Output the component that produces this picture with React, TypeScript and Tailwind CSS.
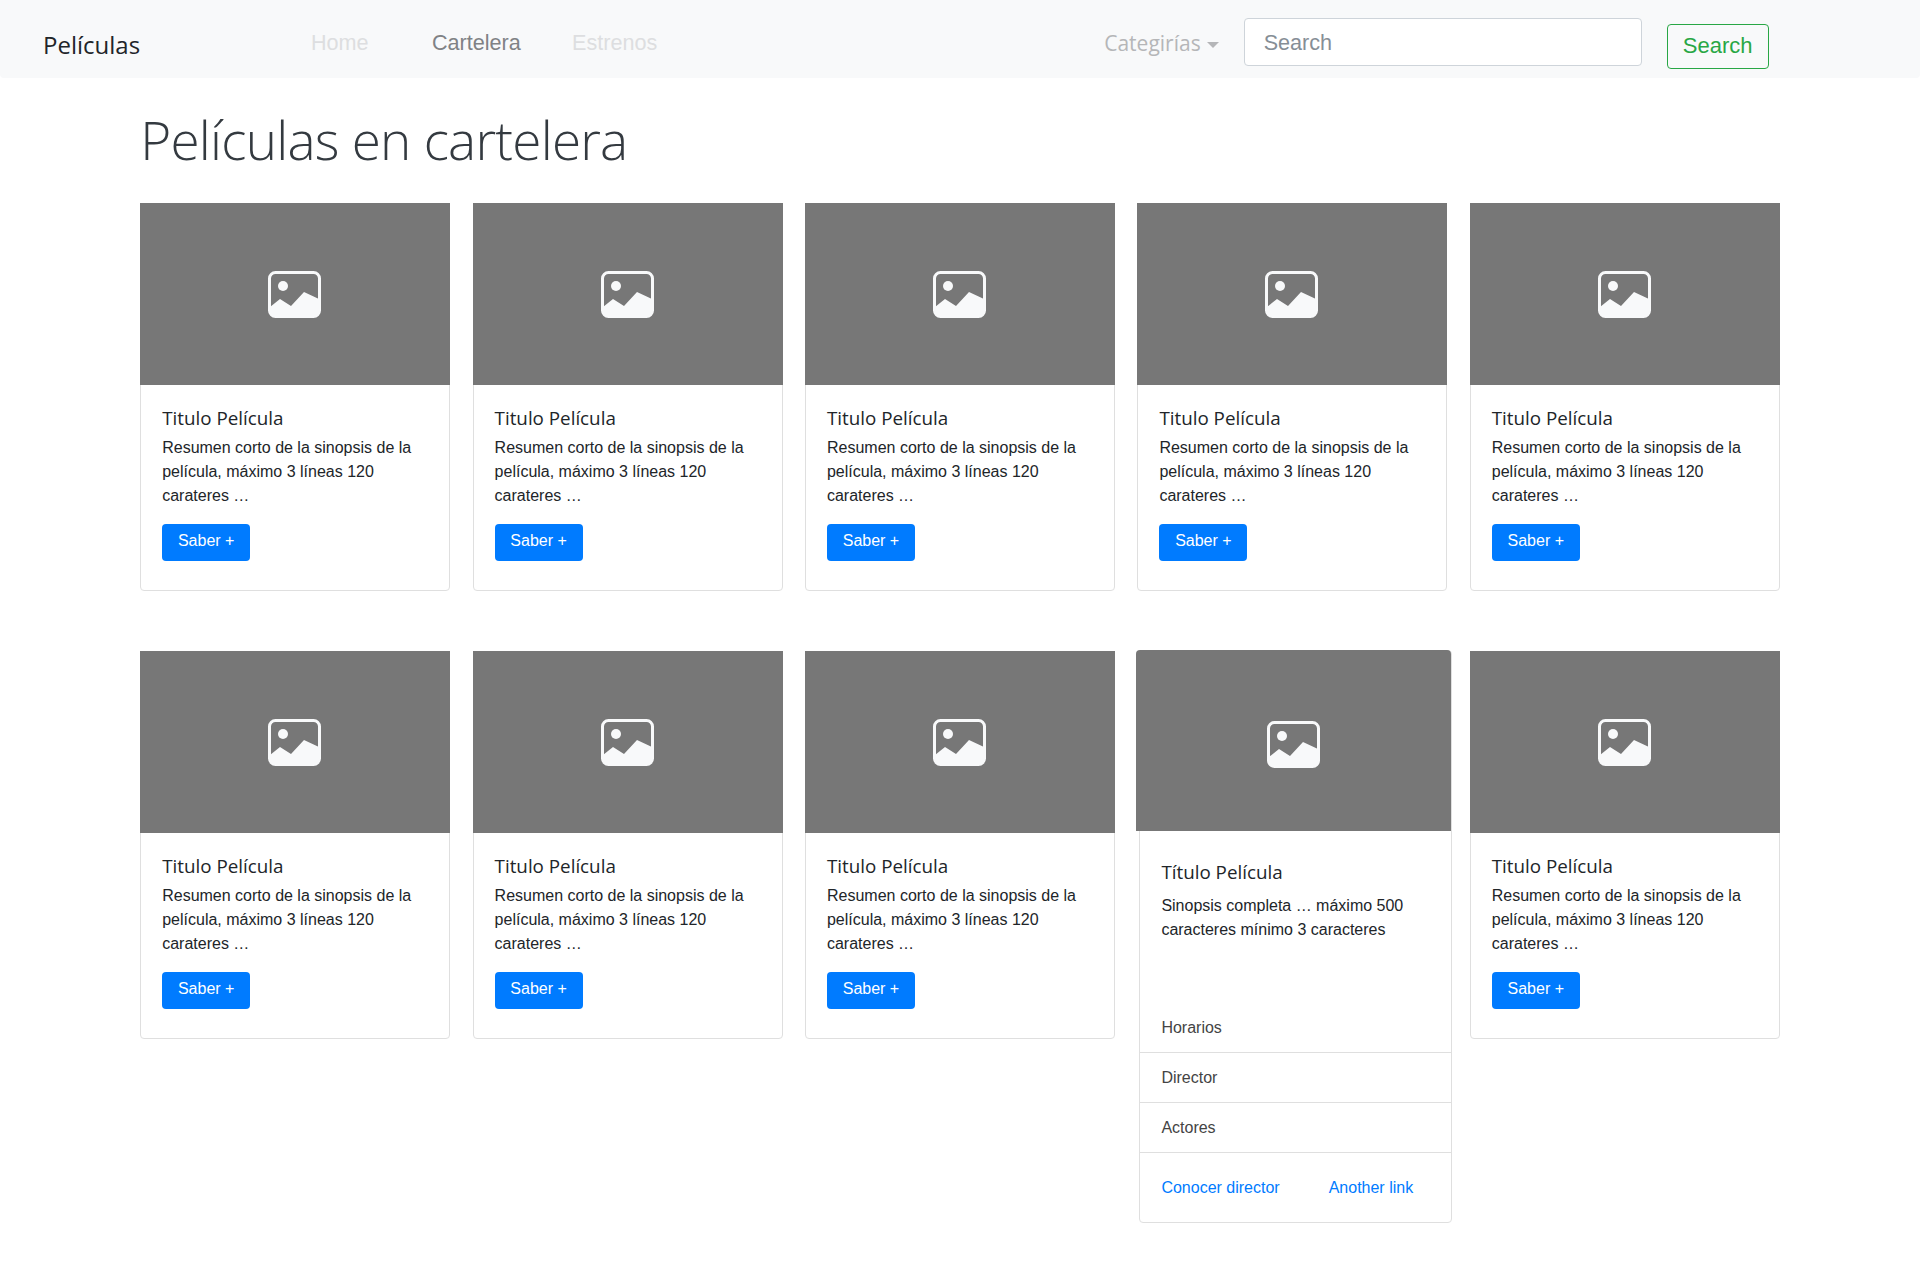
import React from 'react';

const uiFont = "font-['Open_Sans',sans-serif]";

function PlaceholderIcon() {
  return (
    <svg width="53" height="47" viewBox="0 0 53 47" className="block">
      <rect x="1.5" y="1.5" width="50" height="44" rx="6" fill="none" stroke="#f8f9fa" strokeWidth="3" />
      <circle cx="15" cy="15" r="5" fill="#f8f9fa" />
      <path d="M2 36 L12 28 L23 35 L36 21 L51 28 L51 40 Q51 46 45 46 L8 46 Q2 46 2 40 Z" fill="#f8f9fa" />
    </svg>
  );
}

function Poster({ className }: { className: string }) {
  return (
    <div className={`flex items-center justify-center bg-[#777777] ${className}`}>
      <PlaceholderIcon />
    </div>
  );
}

function MovieCard() {
  return (
    <article className="rounded-[4px] border border-[#dfdfdf] bg-white">
      <Poster className="-mx-px -mt-px h-[182px] pr-[1px]" />
      <div className="px-[21px] pt-[21px] pb-[29px]">
        <h3 className={`${uiFont} text-[18.8px] leading-[24px] text-[#212529] mb-[6px]`}>Titulo Película</h3>
        <p className="text-[16px] leading-[24px] text-[#212529] mb-[16px]">
          Resumen corto de la sinopsis de la película, máximo 3 líneas 120 carateres …
        </p>
        <a className="inline-block h-[37px] w-[88px] rounded-[4px] bg-[#007bff] text-center text-[16px] leading-[34px] text-white">
          Saber +
        </a>
      </div>
    </article>
  );
}

function DetailCard() {
  return (
    <article className="ml-[2px] -mt-px w-[313px] rounded-[4px] border border-[#dfdfdf] bg-white">
      <Poster className="-ml-[4px] -mt-px h-[181px] w-[315px] rounded-t-[4px] pt-[8px]" />
      <div className="h-[172px] px-[21px] pt-[29px]">
        <h3 className={`${uiFont} text-[18.8px] leading-[24px] text-[#212529] mb-[10px]`}>Título Película</h3>
        <p className="text-[16px] leading-[24px] text-[#212529]">
          Sinopsis completa … máximo 500 caracteres mínimo 3 caracteres
        </p>
      </div>
      <ul className="text-[16px] leading-[24px] text-[#444444]">
        <li className="h-[50px] border-b border-[#dfdfdf] px-[21px] pt-[13px]">Horarios</li>
        <li className="h-[50px] border-b border-[#dfdfdf] px-[21px] pt-[13px]">Director</li>
        <li className="h-[50px] border-b border-[#dfdfdf] px-[21px] pt-[13px]">Actores</li>
      </ul>
      <div className="flex gap-[49px] px-[21px] pt-[23px] pb-[22px] text-[16px] leading-[24px] text-[#007bff]">
        <a>Conocer director</a>
        <a>Another link</a>
      </div>
    </article>
  );
}

export default function App() {
  return (
    <div className="min-h-[1263px] bg-white font-['Liberation_Sans',Arial,sans-serif]">
      <nav className="flex h-[78px] items-start rounded-b-[4px] bg-[#f8f9fa]">
        <a className={`${uiFont} ml-[43px] mt-[28px] w-[268px] text-[24px] leading-[34px] text-[#212529]`}>Películas</a>
        <div className="mt-[27px] flex text-[21.6px] leading-[32px]">
          <a className="w-[121px] text-[#dddee0]">Home</a>
          <a className="w-[140px] text-[#808285]">Cartelera</a>
          <a className="text-[#dddee0]">Estrenos</a>
        </div>
        <a className={`${uiFont} ml-[447px] mt-[27px] flex items-center text-[21px] leading-[32px] text-[#b5b6b8]`}>
          Categirías
          <span className="ml-[6px] mt-[3px] h-0 w-0 border-x-[6px] border-t-[6px] border-x-transparent border-t-[#b5b6b8]" />
        </a>
        <input
          readOnly
          placeholder="Search"
          className="ml-[25px] mt-[18px] h-[48px] w-[398px] rounded-[4px] border border-[#ced4da] bg-white px-[19px] pt-[2px] text-[21.6px] placeholder:text-[#868e96]"
        />
        <button className="ml-[25px] mt-[24px] h-[45px] w-[102px] rounded-[4px] border border-[#28a745] pb-[2px] text-[22px] leading-none text-[#28a745]">
          Search
        </button>
      </nav>
      <main className="ml-[140.2px] w-[1639.6px]">
        <h1 className={`${uiFont} pt-[23px] pb-[24px] text-[53px] leading-[78px] font-light tracking-[-0.75px] text-[#343a40]`}>Películas en cartelera</h1>
        <div className="grid grid-cols-5 items-start gap-x-[22.4px] gap-y-[60px]">
          <MovieCard />
          <MovieCard />
          <MovieCard />
          <MovieCard />
          <MovieCard />
          <MovieCard />
          <MovieCard />
          <MovieCard />
          <DetailCard />
          <MovieCard />
        </div>
      </main>
    </div>
  );
}
